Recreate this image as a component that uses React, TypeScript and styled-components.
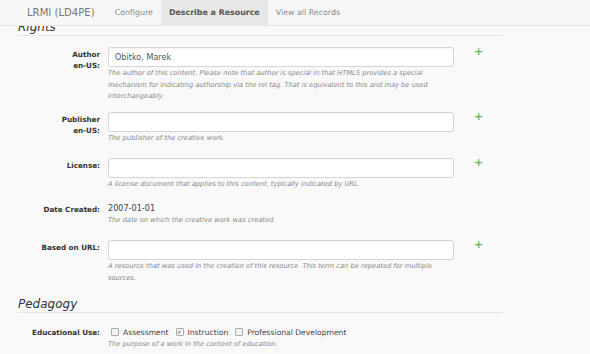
import React from "react";
import styled, { createGlobalStyle } from "styled-components";

const Global = createGlobalStyle`
  html, body { margin: 0; padding: 0; background: #f9f9f9; }
  body { font-family: "DejaVu Sans", Verdana, sans-serif; color: #333; overflow: hidden; }
`;

const Page = styled.div`
  width: 590px;
  height: 354px;
  overflow: hidden;
  background: #f9f9f9;
`;

const NavBar = styled.div`
  position: relative;
  z-index: 2;
  height: 25px;
  display: flex;
  align-items: stretch;
  background: #f7f7f7;
  border-bottom: 1px solid #e6e6e6;
  padding-left: 27px;
`;

const Brand = styled.div`
  font-size: 10.1px;
  color: #777;
  display: flex;
  align-items: center;
  margin-right: 12px;
`;

const NavItem = styled.div<{ $active?: boolean }>`
  font-size: 7.9px;
  display: flex;
  align-items: center;
  padding: 0 8px;
  color: ${(p) => (p.$active ? "#555" : "#888")};
  font-weight: ${(p) => (p.$active ? "bold" : "normal")};
  background: ${(p) => (p.$active ? "#e7e7e7" : "transparent")};
`;

const Content = styled.div`
  padding: 0 87px 0 18px;
`;

const SectionHead = styled.div<{ $top?: number }>`
  font-size: 12px;
  font-style: italic;
  color: #333;
  border-bottom: 1px solid #e5e5e5;
  line-height: 14px;
  padding-bottom: 1px;
  margin-top: ${(p) => p.$top ?? 0}px;
`;

const Form = styled.div`
  display: flex;
  flex-direction: column;
`;

const Row = styled.div<{ $mt: number }>`
  display: grid;
  grid-template-columns: 82px 346px 30px;
  column-gap: 8px;
  margin-top: ${(p) => p.$mt}px;
`;

const Label = styled.div`
  text-align: right;
  font-weight: bold;
  font-size: 7.2px;
  line-height: 11px;
  color: #333;
  padding-top: 2px;
`;

const Field = styled.div`
  display: flex;
  flex-direction: column;
`;

const Input = styled.div`
  height: 20px;
  box-sizing: border-box;
  background: #fff;
  border: 1px solid #d5d5d5;
  border-radius: 3px;
  font-size: 8.1px;
  color: #555;
  display: flex;
  align-items: center;
  padding-left: 6px;
  box-shadow: inset 0 1px 1px rgba(0, 0, 0, 0.04);
`;

const Value = styled.div`
  font-size: 8.1px;
  color: #444;
  line-height: 11px;
  padding-top: 1px;
`;

const Help = styled.div`
  font-size: 6.7px;
  font-style: italic;
  color: #888;
  line-height: 11.5px;
  margin-top: 1px;
`;

const Plus = styled.div`
  color: #5cb85c;
  font-weight: bold;
  font-size: 11px;
  line-height: 11px;
  padding-left: 12px;
  margin-top: -1px;
`;

const Checks = styled.div`
  display: flex;
  align-items: center;
  font-size: 7.6px;
  color: #444;
  line-height: 11px;
  padding-top: 2px;
  gap: 4px;
`;

const Box = styled.span<{ $checked?: boolean }>`
  width: 6px;
  height: 6px;
  border: 1px solid #aaa;
  border-radius: 1px;
  background: #f4f4f4;
  display: inline-flex;
  align-items: center;
  justify-content: center;
  margin-left: 3px;
  font-size: 6px;
  line-height: 6px;
  color: #333;
`;

type RowDef = {
  label: React.ReactNode;
  mt: number;
  input?: string;
  value?: string;
  help: React.ReactNode;
  plus?: boolean;
};

const rows: RowDef[] = [
  {
    label: (
      <>
        Author
        <br />
        en-US:
      </>
    ),
    mt: 11,
    input: "Obitko, Marek",
    help: (
      <>
        The author of this content. Please note that author is special in that HTML5 provides a special
        <br />
        mechanism for indicating authorship via the rel tag. That is equivalent to this and may be used
        <br />
        interchangeably.
      </>
    ),
    plus: true,
  },
  {
    label: (
      <>
        Publisher
        <br />
        en-US:
      </>
    ),
    mt: 9.5,
    input: "",
    help: "The publisher of the creative work.",
    plus: true,
  },
  {
    label: "License:",
    mt: 13.5,
    input: "",
    help: "A license document that applies to this content, typically indicated by URL.",
    plus: true,
  },
  {
    label: "Date Created:",
    mt: 11,
    value: "2007-01-01",
    help: "The date on which the creative work was created.",
  },
  {
    label: "Based on URL:",
    mt: 14,
    input: "",
    help: (
      <>
        A resource that was used in the creation of this resource. This term can be repeated for multiple
        <br />
        sources.
      </>
    ),
    plus: true,
  },
];

export default function App() {
  return (
    <Page>
      <Global />
      <NavBar>
        <Brand>LRMI (LD4PE)</Brand>
        <NavItem>Configure</NavItem>
        <NavItem $active>Describe a Resource</NavItem>
        <NavItem>View all Records</NavItem>
      </NavBar>
      <Content>
        <SectionHead $top={-6}>Rights</SectionHead>
        <Form>
          {rows.map((r, i) => (
            <Row key={i} $mt={r.mt}>
              <Label>{r.label}</Label>
              <Field>
                {r.input !== undefined ? <Input>{r.input}</Input> : <Value>{r.value}</Value>}
                <Help>{r.help}</Help>
              </Field>
              {r.plus ? <Plus>+</Plus> : <span />}
            </Row>
          ))}
        </Form>
        <SectionHead $top={13}>Pedagogy</SectionHead>
        <Row $mt={11.5}>
          <Label>Educational Use:</Label>
          <Field>
            <Checks>
              <Box />
              Assessment
              <Box $checked>✓</Box>
              Instruction
              <Box />
              Professional Development
            </Checks>
            <Help>The purpose of a work in the context of education.</Help>
          </Field>
          <span />
        </Row>
      </Content>
    </Page>
  );
}
